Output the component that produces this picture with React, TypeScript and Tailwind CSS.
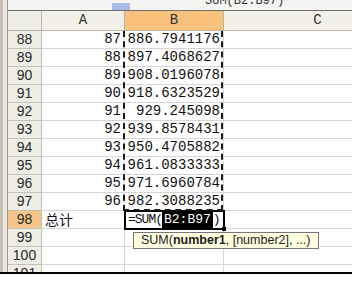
import React from "react";

// Excel 2003 sheet, column B summed in B98
const rows: [number, string, string][] = [
  [88, "87", "886.7941176"],
  [89, "88", "897.4068627"],
  [90, "89", "908.0196078"],
  [91, "90", "918.6323529"],
  [92, "91", "929.245098"],
  [93, "92", "939.8578431"],
  [94, "93", "950.4705882"],
  [95, "94", "961.0833333"],
  [96, "95", "971.6960784"],
  [97, "96", "982.3088235"],
];

const mono = "font-['Liberation_Mono',monospace]";
const sans = "font-['Liberation_Sans',Arial,sans-serif]";

function RowHead({ n, active }: { n: number; active?: boolean }) {
  return (
    <div
      className={`w-[34px] shrink-0 border-r border-b border-[#c5c2b4] text-center text-[14px] leading-[17px] text-[#2a2a2a] ${sans} ${
        active ? "bg-[#f6c38a]" : "bg-[#efeee6]"
      }`}
    >
      {n}
    </div>
  );
}

export default function App() {
  return (
    <div className="relative w-[352px] h-[281px] overflow-hidden bg-white">
      <div className="flex h-[272px]">
        {/* window frame on the left */}
        <div className="flex shrink-0">
          <div className="w-[3px] bg-[#c7beb6]" />
          <div className="w-[4px] bg-[#ebe8e1]" />
          <div className="w-[1px] bg-[#9c9a94]" />
        </div>

        <div className="flex flex-col flex-1 overflow-hidden">
          {/* formula bar, cut off at the top */}
          <div className="h-[10px] shrink-0 flex bg-[#f4f4f2] overflow-hidden">
            <div className="w-[104px] shrink-0" />
            <div className="w-[18px] h-[7px] mt-[3px] shrink-0 bg-[#a9bbe6]" />
            <div className="w-[75px] shrink-0" />
            <div className={`${mono} text-[12px] leading-[12px] -mt-[5px] text-[#333] whitespace-nowrap`}>
              SUM(B2:B97)
            </div>
          </div>
          <div className="h-[1px] shrink-0 bg-[#6f6f6f]" />

          {/* column headers */}
          <div className={`flex h-[20px] shrink-0 ${mono} text-[14px] leading-[19px] text-[#333]`}>
            <div className="w-[34px] shrink-0 bg-[#efeee6] border-r border-b border-[#b8b5a6]" />
            <div className="w-[83px] shrink-0 bg-[#f1efe7] border-r border-b border-[#b8b5a6] text-center">A</div>
            <div className="w-[99px] shrink-0 bg-[#f8c27d] border-r border-b border-[#b8b5a6] text-center">B</div>
            <div className="w-[188px] shrink-0 bg-[#f1efe7] border-r border-b border-[#b8b5a6] text-center">C</div>
          </div>

          {rows.map(([n, a, b]) => (
            <div key={n} className={`flex h-[18px] shrink-0 ${mono} text-[14px] leading-[17px] text-[#111]`}>
              <RowHead n={n} />
              <div className="w-[83px] shrink-0 border-r border-b border-[#d6d6d6] text-right pr-[3px]">{a}</div>
              <div className="w-[99px] shrink-0 border-r border-b border-[#d6d6d6] text-right pr-[3px]">{b}</div>
              <div className="flex-1 border-b border-[#d6d6d6]" />
            </div>
          ))}

          {/* row 98 with the formula being typed */}
          <div className="flex h-[18px] shrink-0 text-[#111]">
            <RowHead n={98} active />
            <div className="w-[83px] shrink-0 border-r border-b border-[#d6d6d6] pl-[3px] text-[14px] leading-[17px] font-['Noto_Sans_CJK_SC',sans-serif]">
              总计
            </div>
            <div
              className={`relative w-[99px] shrink-0 bg-white outline-2 outline-black -outline-offset-1 ${mono} text-[13px] leading-[16px] pl-[3px] pt-[1px] whitespace-nowrap flex`}
            >
              <span className="tracking-[-1px]">=SUM(</span>
              <span className="bg-black text-white px-[2px]">B2:B97</span>
              <span>)</span>
              <div className="absolute -right-[2px] -bottom-[2px] w-[4px] h-[4px] bg-black" />
            </div>
            <div className="flex-1 border-b border-[#d6d6d6]" />
          </div>

          {[99, 100, 101].map((n) => (
            <div key={n} className="flex h-[18px] shrink-0">
              <RowHead n={n} />
              <div className="w-[83px] shrink-0 border-r border-b border-[#d6d6d6]" />
              <div className="w-[99px] shrink-0 border-r border-b border-[#d6d6d6]" />
              <div className="flex-1 border-b border-[#d6d6d6]" />
            </div>
          ))}
        </div>
      </div>
      <div className="h-[2px] bg-black" />
      <div className="h-[7px] bg-white" />

      {/* marching ants around B88:B97 */}
      <div className="absolute left-[123px] top-[31px] w-[100px] h-[180px] border-l-2 border-r-2 border-b-2 border-dashed border-[#1a1a1a] pointer-events-none" />

      {/* function tooltip */}
      <div
        className={`absolute left-[133px] top-[232px] h-[17px] px-[7px] bg-[#ffffe1] border border-[#777] ${sans} text-[12.5px] leading-[15px] text-[#222] whitespace-nowrap`}
      >
        SUM(<b>number1</b>, [number2], ...)
      </div>
    </div>
  );
}
